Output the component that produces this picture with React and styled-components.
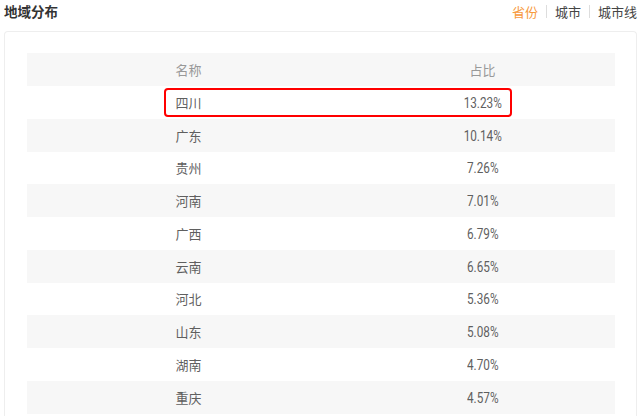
import React from "react";
import styled, { createGlobalStyle } from "styled-components";

const GlobalStyle = createGlobalStyle`
  body {
    margin: 0;
    background: #fff;
    font-family: "Noto Sans CJK SC", "Noto Sans", sans-serif;
  }
`;

const rows = [
  { name: "四川", pct: "13.23%", marked: true },
  { name: "广东", pct: "10.14%" },
  { name: "贵州", pct: "7.26%" },
  { name: "河南", pct: "7.01%" },
  { name: "广西", pct: "6.79%" },
  { name: "云南", pct: "6.65%" },
  { name: "河北", pct: "5.36%" },
  { name: "山东", pct: "5.08%" },
  { name: "湖南", pct: "4.70%" },
  { name: "重庆", pct: "4.57%" },
];

const tabs = ["省份", "城市", "城市线"];

const App = () => {
  return (
    <>
      <GlobalStyle />
      <Page>
        <TopBar>
          <Title>地域分布</Title>
          <Tabs>
            {tabs.map((t, i) => (
              <Tab key={t} active={i === 0}>
                {t}
              </Tab>
            ))}
          </Tabs>
        </TopBar>
        <Card>
          <Table>
            <HeadRow>
              <Cell>名称</Cell>
              <Cell>占比</Cell>
            </HeadRow>
            {rows.map((r, i) => (
              <Row key={r.name} striped={i % 2 === 1}>
                <Cell>{r.name}</Cell>
                <Cell>
                  <Num>{r.pct}</Num>
                </Cell>
                {r.marked && <Mark />}
              </Row>
            ))}
          </Table>
        </Card>
      </Page>
    </>
  );
};

const Page = styled.div`
  width: 640px;
  height: 416px;
  overflow: hidden;
  padding: 0 3px 0 4px;
  box-sizing: border-box;
`;

const TopBar = styled.div`
  display: flex;
  justify-content: space-between;
  align-items: center;
  height: 22px;
  margin-bottom: 9px;
`;

const Title = styled.div`
  font-size: 13.5px;
  font-weight: 700;
  color: #333;
`;

const Tabs = styled.div`
  display: flex;
  align-items: center;
`;

const Tab = styled.span`
  font-size: 13px;
  color: ${(p) => (p.active ? "#f7993b" : "#444")};
  padding: 0 8px;
  line-height: 13px;
  border-left: 1px solid #ddd;
  &:first-child {
    border-left: none;
  }
  &:last-child {
    padding-right: 0;
  }
`;

const Card = styled.div`
  border: 1.5px solid #eee;
  border-bottom: none;
  border-radius: 4px 4px 0 0;
  padding: 21px 21px 0 22px;
  height: 400px;
`;

const Table = styled.div`
  display: flex;
  flex-direction: column;
`;

const HeadRow = styled.div`
  display: grid;
  grid-template-columns: 1fr 1fr;
  height: 33px;
  align-items: center;
  background: #f7f7f7;
  color: #999;
`;

const Row = styled.div`
  position: relative;
  display: grid;
  grid-template-columns: 1fr 1fr;
  height: 32.75px;
  align-items: center;
  background: ${(p) => (p.striped ? "#f7f7f7" : "#fff")};
  color: #5f5f5f;
`;

const Cell = styled.div`
  font-size: 13px;
  text-align: center;
  padding-left: 29px;
`;

const Num = styled.span`
  display: inline-block;
  font-family: "Roboto", sans-serif;
  font-size: 14px;
  transform: scaleX(0.84);
`;

const Mark = styled.div`
  position: absolute;
  left: 137px;
  top: 2px;
  width: 348px;
  height: 29px;
  box-sizing: border-box;
  border: 2.5px solid #f00;
  border-radius: 4px;
`;

export default App;
